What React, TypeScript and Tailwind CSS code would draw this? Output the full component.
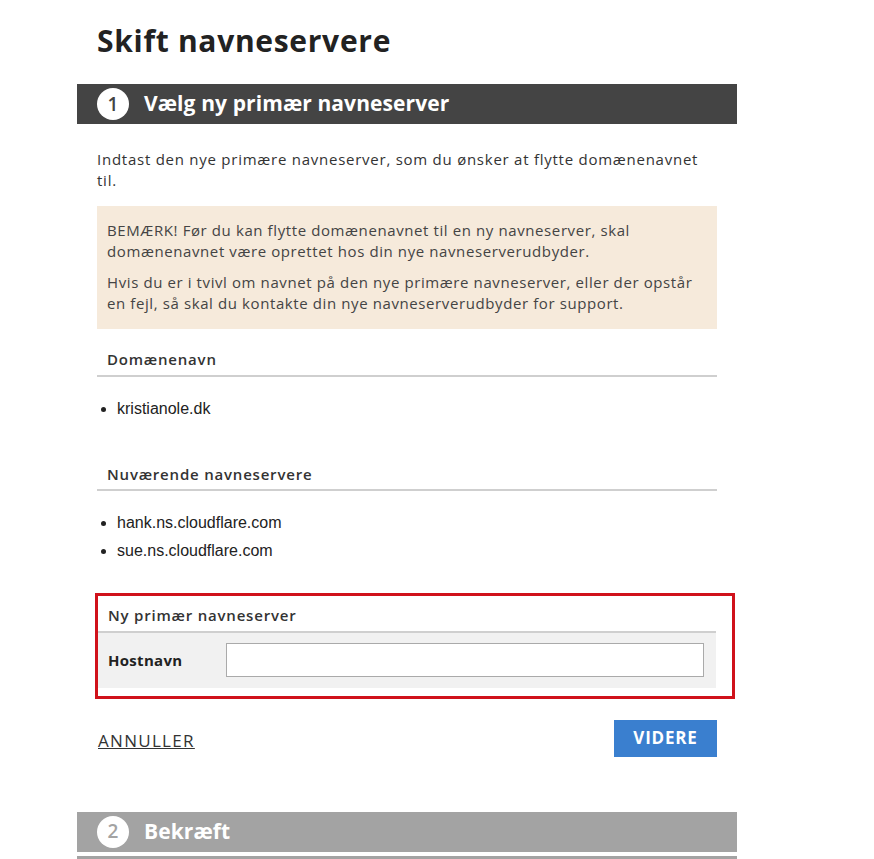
import React from "react";

const font = { fontFamily: "'Open Sans', Lato, sans-serif" };

function StepBar({ n, label, dark }: { n: number; label?: string; dark?: boolean }) {
  return (
    <div
      className={`flex items-center h-[40px] pl-[20px] gap-[15px] ${dark ? "bg-[#444444]" : "bg-[#a3a3a3]"}`}
    >
      <div
        className={`w-[32px] h-[32px] rounded-full bg-white flex items-center justify-center text-[19px] font-semibold ${
          dark ? "text-[#444444]" : "text-[#a3a3a3]"
        }`}
      >
        {label ? n : null}
      </div>
      {label && <div className="text-white text-[21px] font-bold tracking-[0.1px]">{label}</div>}
    </div>
  );
}

function SectionHead({ children }: { children: React.ReactNode }) {
  return (
    <div className="border-b-2 border-[#cfcfcf] pl-[10px] pb-[4px] text-[15px] font-semibold text-[#333] tracking-[0.8px]">
      {children}
    </div>
  );
}

function Bullets({ items }: { items: string[] }) {
  return (
    <ul
      className="list-disc pl-[20px] mt-[22px] space-y-[8px] text-[16px] text-[#222] leading-[20px]"
      style={{ fontFamily: "'Liberation Sans', Arial, sans-serif" }}
    >
      {items.map((i) => (
        <li key={i}>{i}</li>
      ))}
    </ul>
  );
}

export default function App() {
  return (
    <div className="bg-white min-h-[859px] overflow-hidden" style={font}>
      <div className="ml-[77px] w-[660px]">
        <h1 className="pl-[20px] pt-[22px] text-[30px] font-bold text-[#222] leading-[38px] tracking-[0.7px]">
          Skift navneservere
        </h1>
        <div className="mt-[24px]">
          <StepBar n={1} label="Vælg ny primær navneserver" dark />
        </div>

        <div className="px-[20px]">
          <p className="mt-[25px] pr-[8px] text-[15px] leading-[21px] text-[#333] tracking-[0.75px]">
            Indtast den nye primære navneserver, som du ønsker at flytte domænenavnet til.
          </p>

          <div className="mt-[15px] bg-[#f6eadb] px-[10px] pt-[14px] pb-[15px] text-[15px] leading-[21px] text-[#444] tracking-[0.6px] space-y-[10px]">
            <p>
              BEMÆRK! Før du kan flytte domænenavnet til en ny navneserver, skal
              <br />
              domænenavnet være oprettet hos din nye navneserverudbyder.
            </p>
            <p>
              Hvis du er i tvivl om navnet på den nye primære navneserver, eller der opstår
              <br />
              en fejl, så skal du kontakte din nye navneserverudbyder for support.
            </p>
          </div>

          <div className="mt-[19px]">
            <SectionHead>Domænenavn</SectionHead>
            <Bullets items={["kristianole.dk"]} />
          </div>

          <div className="mt-[44px]">
            <SectionHead>Nuværende navneservere</SectionHead>
            <Bullets items={["hank.ns.cloudflare.com", "sue.ns.cloudflare.com"]} />
          </div>

          <div className="mt-[32px] -ml-[2px] -mr-[18px] border-[3px] border-[#d0121b] pr-[16px] pt-[8px] pb-[8px]">
            <SectionHead>Ny primær navneserver</SectionHead>
            <div className="bg-[#f1f1f1] flex items-center h-[55px] pl-[10px] pr-[12px]">
              <label className="w-[118px] text-[15px] font-bold text-[#222] tracking-[0.3px]">Hostnavn</label>
              <input className="flex-1 h-[34px] bg-white border border-[#aaaaaa] outline-none" />
            </div>
          </div>

          <div className="mt-[21px] flex items-center justify-between">
            <a className="ml-[1px] pt-[5px] text-[17px] underline text-[#333] tracking-[1.3px] cursor-pointer">
              ANNULLER
            </a>
            <button className="w-[103px] h-[37px] bg-[#3a7fcf] text-white text-[17px] font-bold tracking-[0.8px]">
              VIDERE
            </button>
          </div>
        </div>

        <div className="mt-[55px]">
          <StepBar n={2} label="Bekræft" />
        </div>
        <div className="mt-[4px]">
          <StepBar n={3} />
        </div>
      </div>
    </div>
  );
}
